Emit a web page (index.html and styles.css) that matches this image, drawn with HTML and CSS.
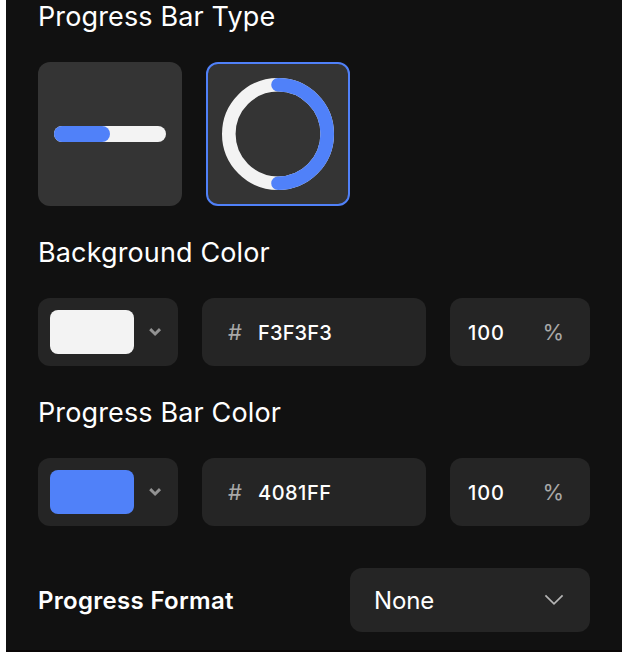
FILE: index.html
```html
<!DOCTYPE html>
<html lang="en">
<head>
<meta charset="utf-8">
<title>Progress Bar Settings</title>
<link rel="stylesheet" href="styles.css">
</head>
<body>
<main class="panel">
  <section>
    <h2 class="heading">Progress Bar Type</h2>
    <div class="types">
      <button class="type" aria-label="Line">
        <span class="line"><span class="line-fill"></span></span>
      </button>
      <button class="type selected" aria-label="Circle">
        <svg width="112" height="112" viewBox="0 0 112 112" fill="none">
          <circle cx="56" cy="56" r="49.2" stroke="#f3f3f3" stroke-width="13.6"/>
          <path d="M56 6.8a49.2 49.2 0 0 1 0 98.4" stroke="#5081f9" stroke-width="13.6" stroke-linecap="round"/>
        </svg>
      </button>
    </div>
  </section>
  <section>
    <h2 class="heading">Background Color</h2>
    <div class="color-row">
      <button class="field picker" aria-label="Pick color"><span class="swatch light"></span>
        <svg class="caret" width="14" height="10" viewBox="0 0 14 10" fill="none"><path d="M2.2 2.1 7.1 7l4.9-4.9" stroke="#929292" stroke-width="2.9"/></svg>
      </button>
      <div class="field hex"><span class="unit">#</span><span class="value letters">F3F3F3</span></div>
      <div class="field alpha"><span class="value digits">100</span><span class="unit">%</span></div>
    </div>
  </section>
  <section>
    <h2 class="heading">Progress Bar Color</h2>
    <div class="color-row">
      <button class="field picker" aria-label="Pick color"><span class="swatch blue"></span>
        <svg class="caret" width="14" height="10" viewBox="0 0 14 10" fill="none"><path d="M2.2 2.1 7.1 7l4.9-4.9" stroke="#929292" stroke-width="2.9"/></svg>
      </button>
      <div class="field hex"><span class="unit">#</span><span class="value">4081FF</span></div>
      <div class="field alpha"><span class="value digits">100</span><span class="unit">%</span></div>
    </div>
  </section>
  <section class="format">
    <h3 class="label">Progress Format</h3>
    <button class="field select"><span>None</span>
      <svg width="20" height="12" viewBox="0 0 20 12" fill="none"><path d="m1.4 1.3 8.6 8.6 8.6-8.6" stroke="#b4b4b4" stroke-width="1.7"/></svg>
    </button>
  </section>
</main>
</body>
</html>
```
FILE: styles.css
```css
* { box-sizing: border-box; }

body {
  margin: 0;
  background: #fff;
  font-family: Inter, "Liberation Sans", sans-serif;
  color: #fff;
}

button {
  border: 0;
  padding: 0;
  font: inherit;
  color: inherit;
}

.panel {
  height: 652px;
  margin-left: 6px;
  padding: 0 32px;
  background: #111;
  border-bottom: 2px solid #0a0607;
  overflow: hidden;
}

.heading {
  margin: 0;
  height: 34px;
  font-size: 27px;
  line-height: 33px;
  font-weight: 400;
  letter-spacing: 0.13px;
  white-space: nowrap;
}

.types {
  display: flex;
  gap: 24px;
  margin: 28px 0 30px;
}

.type {
  display: flex;
  align-items: center;
  justify-content: center;
  width: 144px;
  height: 144px;
  border-radius: 12px;
  background: #343434;
}

.type.selected { border: 2px solid #5081f9; }

.line {
  width: 112px;
  height: 16px;
  border-radius: 8px;
  background: #f3f3f3;
}

.line-fill {
  display: block;
  width: 50%;
  height: 100%;
  border-radius: 8px;
  background: #5081f9;
}

.color-row {
  display: flex;
  gap: 24px;
  margin: 28px 0 30px;
}

.field {
  display: flex;
  align-items: center;
  height: 68px;
  border-radius: 12px;
  background: #252525;
}

.picker { width: 140px; padding-left: 12px; }

.swatch {
  width: 84px;
  height: 44px;
  border-radius: 8px;
}

.light { background: #f3f3f3; }
.blue { background: #5081f9; }

.caret { margin-left: 14px; }

.hex { width: 224px; padding: 0 0 0 26px; }
.hex .unit { width: 30px; }

.alpha {
  width: 140px;
  padding: 0 26px 0 18px;
  justify-content: space-between;
}

.value {
  padding-top: 2px;
  font-size: 20px;
  font-weight: 500;
  letter-spacing: 0.5px;
}

.letters { letter-spacing: 0.15px; }
.digits { letter-spacing: 0.9px; }

.unit { font-size: 22px; color: #a8a8a8; }

.format {
  display: flex;
  align-items: center;
  justify-content: space-between;
  margin-top: 42px;
}

.label {
  margin: 0;
  font-size: 24px;
  font-weight: 600;
  letter-spacing: 0.3px;
}

.select {
  width: 240px;
  height: 64px;
  padding: 0 26px 0 24px;
  justify-content: space-between;
  font-size: 24px;
  letter-spacing: -0.15px;
}
```
